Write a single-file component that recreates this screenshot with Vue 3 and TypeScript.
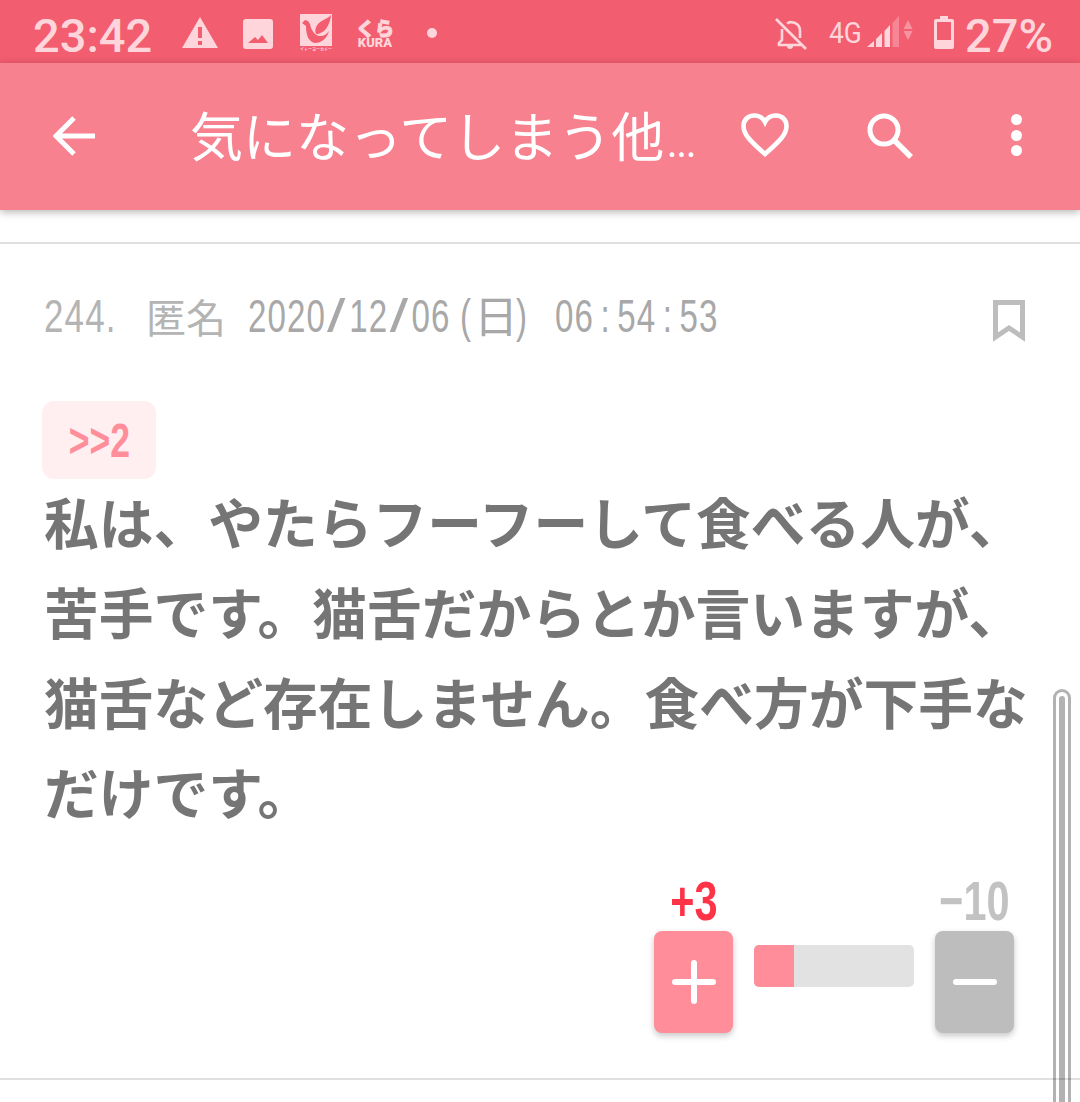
<script setup lang="ts">
const post = {
  no: '244.',
  name: '匿名',
  date: ['2020', '12', '06'],
  week: '日',
  time: ['06', '54', '53'],
  anchor: '>>2',
  lines: [
    '私は、やたらフーフーして食べる人が、',
    '苦手です。猫舌だからとか言いますが、',
    '猫舌など存在しません。食べ方が下手な',
    'だけです。',
  ],
  plus: 3,
  minus: 10,
}
const ratio = 25
</script>

<template>
  <div class="screen">
    <!-- status bar -->
    <div class="status">
      <span class="clock">23:42</span>
      <svg class="st-warn" viewBox="0 0 36 32" width="36" height="32">
        <path d="M18 0 36 31H0Z M16 10v11h4V10Z M16 24v4h4v-4Z" fill="#fdd5da" fill-rule="evenodd" />
      </svg>
      <svg class="st-pic" viewBox="0 0 30 30" width="30" height="30">
        <path d="M3 0h24a3 3 0 0 1 3 3v24a3 3 0 0 1-3 3H3a3 3 0 0 1-3-3V3a3 3 0 0 1 3-3Z M5 24h20l-6-8-4 5-3-3Z" fill="#fdd5da" fill-rule="evenodd" />
      </svg>
      <div class="st-yokado">
        <svg viewBox="0 0 32 32" width="32" height="32">
          <rect width="32" height="32" fill="#fdd5da" />
          <path d="M31 1C28 5 21 6 18 10 15 14 15 17 16 20 24 20 30 12 31 1Z" fill="#f35d70" />
          <path d="M2 9 5 6 8 7 10 10C11 16 15 22 20 22 24 22 27 20 29 17 27 25 21 29 15 29 9 28 6 22 6 12Z" fill="#f35d70" />
        </svg>
        <span class="yokado-name">イトーヨーカドー</span>
      </div>
      <div class="st-kura">
        <span class="kura-kana">くら</span>
        <span class="kura-latin">KURA</span>
      </div>
      <span class="st-dot"></span>

      <div class="status-right">
        <svg class="st-bell" viewBox="0 0 32 32" width="32" height="32">
          <g fill="none" stroke="#fdd5da" stroke-width="2.6">
            <path d="M1 1 31 31" />
            <path d="M7 11V22L4 25V27H26M12 5.500C16 3 25 4 25 13V20" />
          </g>
          <path d="M12 28h6a3 3 0 0 1-6 0Z M13 4a3 3 0 0 1 5 0Z" fill="#fdd5da" />
        </svg>
        <span class="st-net"><span class="st-net-text">4G</span></span>
        <svg class="st-signal" viewBox="0 0 46 32" width="46" height="32">
          <path d="M0 31 7 25V31Z M9 23 15 17V31H9Z M17.500 15 23 9V31H17.500Z" fill="#fdd5da" />
          <path d="M25.500 7 32 0V31H25.500Z" fill="#fdd5da" opacity="0.35" />
          <path d="M41 4 45.500 13H36.500Z M36.500 15H45.500L41 24Z" fill="#fdd5da" opacity="0.45" />
        </svg>
        <svg class="st-batt" viewBox="0 0 20 33" width="20" height="33">
          <path d="M6 0h8v3h4a2 2 0 0 1 2 2v26a2 2 0 0 1-2 2H2a2 2 0 0 1-2-2V5a2 2 0 0 1 2-2h4Z M3 6V24H17V6Z" fill="#fdd5da" fill-rule="evenodd" />
        </svg>
        <span class="pct">27%</span>
      </div>
    </div>

    <!-- app bar -->
    <header class="appbar">
      <svg class="ab-back" viewBox="0 0 44 42" width="44" height="42">
        <path d="M42 21H4M21 3 3 21 21 39" fill="none" stroke="#fff" stroke-width="5" />
      </svg>
      <div class="ab-title">気になってしまう他<span class="ab-dots">...</span></div>
      <svg class="ab-heart" viewBox="0 0 48 44" width="48" height="44">
        <path d="M24 41C8 27 2.500 21 2.500 13 2.500 7 7 2.500 13 2.500 18 2.500 22 5 24 9 26 5 30 2.500 35 2.500 41 2.500 45.500 7 45.500 13 45.500 21 40 27 24 41Z" fill="none" stroke="#fff" stroke-width="4.600" />
      </svg>
      <svg class="ab-search" viewBox="0 0 46 46" width="46" height="46">
        <circle cx="17" cy="17" r="14" fill="none" stroke="#fff" stroke-width="5" />
        <path d="M27 27 44 44" stroke="#fff" stroke-width="5.500" />
      </svg>
      <div class="ab-more"><i></i><i></i><i></i></div>
    </header>

    <main class="thread">
      <article class="post">
        <div class="meta">
          <span class="slot slot-no"><span class="narrow narrow-no">{{ post.no }}</span></span>
          <span class="slot slot-name">{{ post.name }}</span>
          <span class="slot slot-date"><span class="narrow">{{ post.date[0] }}<i class="slash">/</i>{{ post.date[1] }}<i class="slash">/</i>{{ post.date[2] }}</span></span>
          <span class="slot slot-paren"><span class="narrow">(</span></span>
          <span class="slot slot-week">{{ post.week }}</span>
          <span class="slot slot-paren2"><span class="narrow">)</span></span>
          <span class="slot"><span class="narrow time">{{ post.time[0] }}<i class="colon">:</i>{{ post.time[1] }}<i class="colon">:</i>{{ post.time[2] }}</span></span>
          <svg class="bookmark" viewBox="0 0 32 42" width="32" height="42">
            <path d="M2.500 2.500H29.500V37L16 28 2.500 37Z" fill="none" stroke="#bdbdbd" stroke-width="5" />
          </svg>
        </div>
        <div class="anchor"><span class="anchor-text">{{ post.anchor }}</span></div>
        <div class="body">
          <p v-for="line in post.lines" :key="line">{{ line }}</p>
        </div>
        <div class="votes">
          <div class="vote">
            <span class="count count-plus">+{{ post.plus }}</span>
            <button class="vote-btn vote-plus">
              <svg viewBox="0 0 44 44" width="44" height="44">
                <path d="M22 3V41M3 22H41" stroke="#fff" stroke-width="6" stroke-linecap="round" />
              </svg>
            </button>
          </div>
          <div class="meter">
            <div class="meter-fill" :style="{ width: ratio + '%' }"></div>
          </div>
          <div class="vote">
            <span class="count count-minus">−{{ post.minus }}</span>
            <button class="vote-btn vote-minus">
              <svg viewBox="0 0 44 44" width="44" height="44">
                <path d="M3 22H41" stroke="#fff" stroke-width="6" stroke-linecap="round" />
              </svg>
            </button>
          </div>
        </div>
      </article>
    </main>

    <!-- fast scroll handle lies over the list -->
    <div class="scroll-handle"><div class="scroll-core"></div></div>
  </div>
</template>

<style scoped>
.screen {
  position: relative;
  width: 1080px;
  height: 1102px;
  overflow: hidden;
  background: #fff;
  font-family: "Noto Sans CJK JP", "Noto Sans", sans-serif;
}

.status {
  display: flex;
  align-items: flex-start;
  height: 63px;
  padding-left: 33px;
  box-sizing: border-box;
  background: #f35d70;
  color: #fdd5da;
  font-family: Roboto, sans-serif;
}
.clock {
  width: 149px;
  margin-top: 8px;
  font-size: 47px;
  font-weight: 500;
  line-height: 56px;
}
.st-warn { margin-top: 17px; }
.st-pic { margin: 19px 0 0 25px; }
.st-yokado {
  display: flex;
  flex-direction: column;
  align-items: center;
  width: 32px;
  margin: 14px 0 0 27px;
}
.yokado-name {
  font-family: "Noto Sans CJK JP", sans-serif;
  font-size: 4px;
  font-weight: 700;
  line-height: 7px;
  white-space: nowrap;
}
.st-kura {
  display: flex;
  flex-direction: column;
  align-items: center;
  width: 36px;
  margin: 19px 0 0 25px;
}
.kura-kana {
  font-family: "Noto Sans CJK JP", sans-serif;
  font-size: 19px;
  font-weight: 900;
  line-height: 18px;
  white-space: nowrap;
  -webkit-text-stroke: 1px #fdd5da;
}
.kura-latin {
  font-size: 13px;
  font-weight: 900;
  line-height: 11px;
}
.st-dot {
  width: 10px;
  height: 10px;
  margin: 28px 0 0 34px;
  border-radius: 50%;
  background: #fdd5da;
}
.status-right {
  display: flex;
  align-items: flex-start;
  margin-left: auto;
  padding-right: 27px;
}
.st-bell { margin: 18px 0 0 0; }
.st-net {
  margin: 15px 0 0 22px;
  width: 38px;
  font-size: 30px;
  line-height: 36px;
}
.st-net-text {
  display: inline-block;
  transform: scaleX(0.88);
  transform-origin: left center;
}
.st-signal { margin-top: 16px; }
.st-batt { margin: 16px 0 0 21px; }
.pct {
  margin: 8px 0 0 11px;
  font-size: 47px;
  font-weight: 500;
  line-height: 56px;
}

.appbar {
  position: relative;
  display: flex;
  align-items: flex-start;
  height: 147px;
  box-sizing: border-box;
  background: #f7818e;
  box-shadow: 0 2px 8px rgba(0, 0, 0, 0.3);
}
.ab-back { margin: 52px 0 0 53px; flex: none; }
.ab-title {
  width: 551px;
  margin: 33px 0 0 93px;
  flex: none;
  color: #fff;
  font-size: 53px;
  line-height: 76px;
  white-space: nowrap;
}
.ab-dots {
  margin-left: 3px;
  font-size: 34px;
}
.ab-heart { margin: 50px 0 0 0; flex: none; }
.ab-search { margin: 50px 0 0 78px; flex: none; }
.ab-more {
  display: flex;
  flex-direction: column;
  gap: 4.500px;
  margin: 51px 0 0 98px;
}
.ab-more i {
  display: block;
  width: 11px;
  height: 11px;
  border-radius: 50%;
  background: #fff;
}

.thread { padding-top: 32px; }
.post {
  padding: 0 0 0 44px;
  height: 838px;
  box-sizing: border-box;
  border-top: 2px solid #e0e0e0;
  border-bottom: 2px solid #e0e0e0;
}

.meta {
  display: flex;
  align-items: flex-start;
  height: 157px;
  padding-top: 44px;
  box-sizing: border-box;
  color: #a8a8a8;
  font-family: "Liberation Sans", sans-serif;
  font-size: 46px;
  line-height: 56px;
}
.slot { flex: none; white-space: nowrap; }
.narrow {
  display: inline-block;
  transform: scaleX(0.72);
  transform-origin: left center;
  letter-spacing: 1.500px;
}
.narrow-no { transform: scaleX(0.76); }
.slot-no { width: 102px; color: #b4b4b4; }
.slot-name {
  width: 102px;
  color: #b4b4b4;
  font-family: "Noto Sans CJK JP", sans-serif;
  font-size: 40px;
}
.slot-date { width: 212px; }
.slot-date .slash {
  display: inline-block;
  margin: 0 9px;
  font-style: normal;
  transform: scaleX(2);
}
.slot-paren { width: 14px; }
.slot-week {
  width: 42px;
  font-family: "Noto Sans CJK JP", sans-serif;
  font-size: 44px;
  line-height: 52px;
}
.slot-paren2 { width: 39px; }
.time .colon {
  margin: 0 9px;
  font-style: normal;
}
.bookmark { margin: 12px 55px 0 auto; }

.anchor {
  display: flex;
  align-items: center;
  justify-content: center;
  width: 114px;
  height: 78px;
  margin-left: -2px;
  border-radius: 12px;
  background: #ffeff1;
  color: #ff8d9a;
  font-family: "Liberation Sans", sans-serif;
  font-size: 48px;
  font-weight: 700;
}
.anchor-text {
  display: inline-block;
  transform: scaleX(0.74);
}

.body {
  margin-top: -4px;
  color: #757575;
  font-size: 54.750px;
  font-weight: 700;
  line-height: 90px;
  white-space: nowrap;
}
.body p { margin: 0; }

.votes {
  display: flex;
  align-items: flex-end;
  justify-content: flex-end;
  margin-top: 39px;
  padding-right: 66px;
}
.vote {
  display: flex;
  flex-direction: column;
  align-items: center;
  width: 79px;
}
.count {
  display: inline-block;
  margin-bottom: 3px;
  font-family: "Liberation Sans", sans-serif;
  font-size: 56px;
  font-weight: 700;
  line-height: 54px;
  transform: scaleX(0.74);
}
.count-plus { color: #ff3347; }
.count-minus { color: #c2c2c2; }
.vote-btn {
  display: flex;
  align-items: center;
  justify-content: center;
  width: 79px;
  height: 102px;
  padding: 0;
  border: 0;
  border-radius: 8px;
  box-shadow: 0 3px 6px rgba(0, 0, 0, 0.22);
}
.vote-plus { background: #ff8d9a; }
.vote-minus { background: #bdbdbd; }
.meter {
  width: 160px;
  height: 42px;
  margin: 0 21px 46px;
  border-radius: 5px;
  overflow: hidden;
  background: #e2e2e2;
}
.meter-fill {
  height: 100%;
  background: #ff8d9a;
}

.scroll-handle {
  position: absolute;
  top: 689px;
  left: 1053px;
  width: 18px;
  height: 430px;
  box-sizing: border-box;
  border: 3px solid rgba(0, 0, 0, 0.3);
  border-bottom: 0;
  border-radius: 9px 9px 0 0;
}
.scroll-core {
  width: 6px;
  height: 420px;
  margin: 4px 0 0 3px;
  border-radius: 3px 3px 0 0;
  background: rgba(0, 0, 0, 0.3);
}
</style>
